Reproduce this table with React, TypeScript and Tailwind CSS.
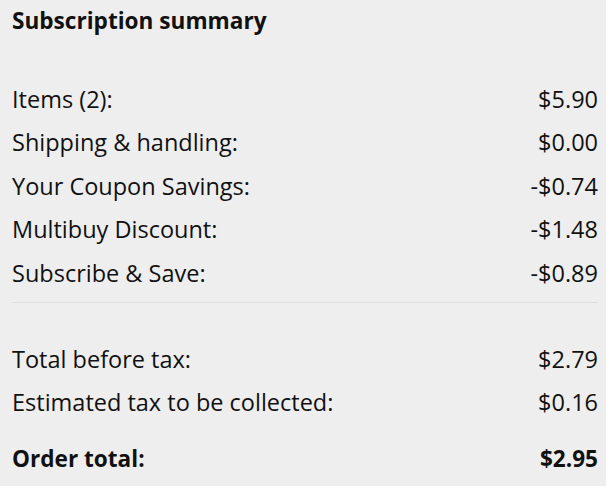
import React from 'react';

type Line = { label: string; value: string };

const ITEMS: Line[] = [
  { label: 'Items (2):', value: '$5.90' },
  { label: 'Shipping & handling:', value: '$0.00' },
  { label: 'Your Coupon Savings:', value: '-$0.74' },
  { label: 'Multibuy Discount:', value: '-$1.48' },
  { label: 'Subscribe & Save:', value: '-$0.89' },
];

const TOTALS: Line[] = [
  { label: 'Total before tax:', value: '$2.79' },
  { label: 'Estimated tax to be collected:', value: '$0.16' },
];

const Row = ({ label, value }: Line) => (
  <div className="flex h-[43.5px] items-center justify-between">
    <span>{label}</span>
    <span>{value}</span>
  </div>
);

export default function App() {
  return (
    <div
      className="min-h-[486px] w-[606px] bg-[#eeeeee] pl-3 pr-2 text-[23.5px] text-[#111111]"
      style={{ fontFamily: '"Open Sans", "Noto Sans", sans-serif' }}
    >
      {/* Heading */}
      <h2 className="flex h-[42px] items-center text-[22.6px] font-bold">Subscription summary</h2>

      {/* Line items */}
      <div className="mt-[35.5px] flex flex-col">
        {ITEMS.map((l) => (
          <Row key={l.label} {...l} />
        ))}
      </div>

      <div className="mt-[7px] h-px bg-[#dedede]" />

      {/* Totals */}
      <div className="mt-[34.5px] flex flex-col">
        {TOTALS.map((l) => (
          <Row key={l.label} {...l} />
        ))}
      </div>

      <div className="mt-[13px] flex h-[43px] items-center justify-between text-[22.6px] font-bold">
        <span>Order total:</span>
        <span>$2.95</span>
      </div>
    </div>
  );
}
